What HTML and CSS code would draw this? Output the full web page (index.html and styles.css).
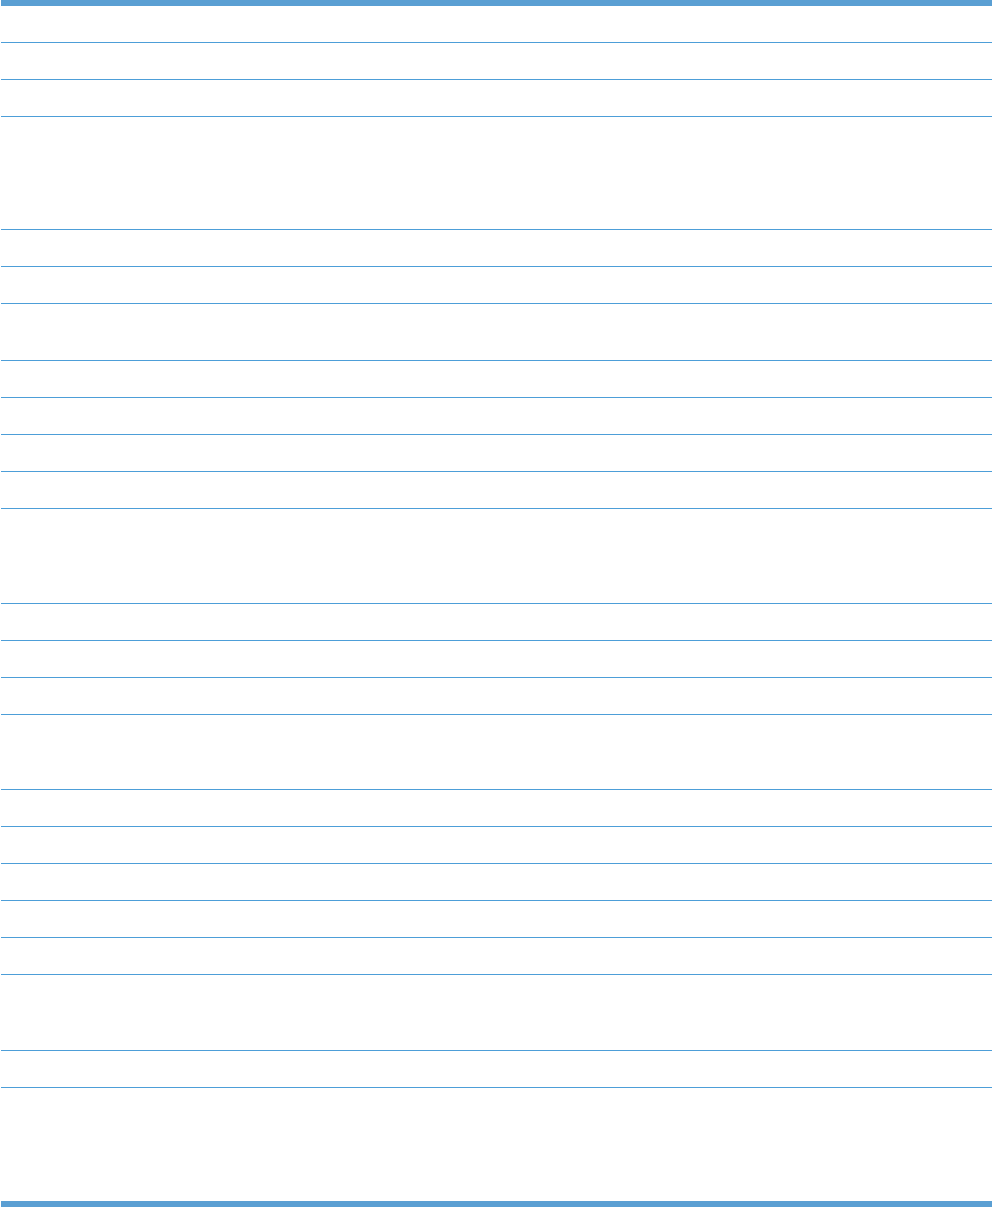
FILE: index.html
```html
<!DOCTYPE html>
<html lang="en">
<head>
    <meta charset="UTF-8">
    <meta name="viewport" content="width=device-width, initial-scale=1.0">
    <title>Table</title>
    <link rel="stylesheet" href="styles.css">
</head>
<body>
    <div class="sheet">
        <div class="row h1"></div>
        <div class="row h1"></div>
        <div class="row h1"></div>
        <div class="row h5"></div>
        <div class="row h1"></div>
        <div class="row h1"></div>
        <div class="row h2"></div>
        <div class="row h1"></div>
        <div class="row h1"></div>
        <div class="row h1"></div>
        <div class="row h1"></div>
        <div class="row h4"></div>
        <div class="row h1"></div>
        <div class="row h1"></div>
        <div class="row h1"></div>
        <div class="row h3"></div>
        <div class="row h1"></div>
        <div class="row h1"></div>
        <div class="row h1"></div>
        <div class="row h1"></div>
        <div class="row h1"></div>
        <div class="row h3b"></div>
        <div class="row h1"></div>
        <div class="row last h5b"></div>
    </div>
</body>
</html>
```

FILE: styles.css
```css
:root {
    --bar-color: #5a9fd3;
    --line-color: #4d9ed8;
}

body {
    font-family: 'Liberation Sans', Arial, sans-serif;
    margin: 0;
    padding: 0;
    background: white;
}

.sheet {
    width: 991px;
    margin-left: 1px;
    border-top: 6px solid var(--bar-color);
    border-bottom: 6px solid var(--bar-color);
    display: flex;
    flex-direction: column;
}

.row {
    border-bottom: 1px solid var(--line-color);
}

.row.last {
    border-bottom: none;
}

.h1 { height: 36px; }
.h2 { height: 56px; }
.h3 { height: 74px; }
.h3b { height: 75px; }
.h4 { height: 94px; }
.h5 { height: 112px; }
.h5b { height: 113px; }
```
